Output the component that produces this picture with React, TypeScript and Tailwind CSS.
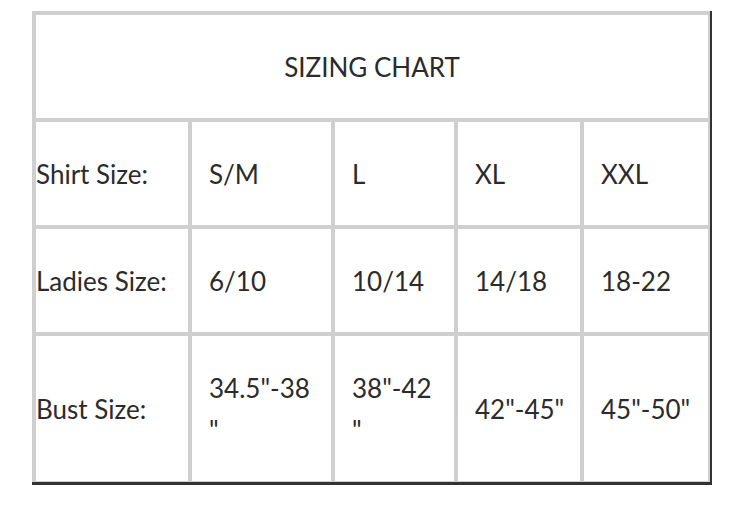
import React from "react";

const Cell = ({ children, first }: { children: React.ReactNode; first?: boolean }) => (
  <div
    className={`bg-white flex items-center py-[30.5px] leading-[42px] whitespace-nowrap ${first ? "pl-0" : "pl-[17px]"}`}
  >
    <div>{children}</div>
  </div>
);

export default function App() {
  const rows: { label: string; vals: React.ReactNode[] }[] = [
    { label: "Shirt Size:", vals: ["S/M", "L", "XL", "XXL"] },
    { label: "Ladies Size:", vals: ["6/10", "10/14", "14/18", "18-22"] },
    {
      label: "Bust Size:",
      vals: [
        <>34.5"-38<br />"</>,
        <>38"-42<br />"</>,
        '42"-45"',
        '45"-50"',
      ],
    },
  ];
  return (
    <div
      className="bg-white w-[730px] h-[510px] pt-[11px] pl-[32px] text-[26px] text-[#2b2b2b]"
      style={{ fontFamily: "Lato, 'Open Sans', sans-serif" }}
    >
      <div className="w-[680px] border-r-2 border-b-[3px] border-[#333]">
        <div className="bg-[#cfcfcf] pt-[4px] pl-[4px] pr-[2px] pb-[1px]">
          <div className="grid grid-cols-[152px_139px_119px_122px_124px] gap-[4px]">
            <div className="col-span-5 bg-white flex items-center justify-center h-[103px] leading-[42px]">
              SIZING CHART
            </div>
            {rows.map((r) => (
              <React.Fragment key={r.label}>
                <Cell first>{r.label}</Cell>
                {r.vals.map((v, i) => (
                  <Cell key={i}>{v}</Cell>
                ))}
              </React.Fragment>
            ))}
          </div>
        </div>
      </div>
    </div>
  );
}
